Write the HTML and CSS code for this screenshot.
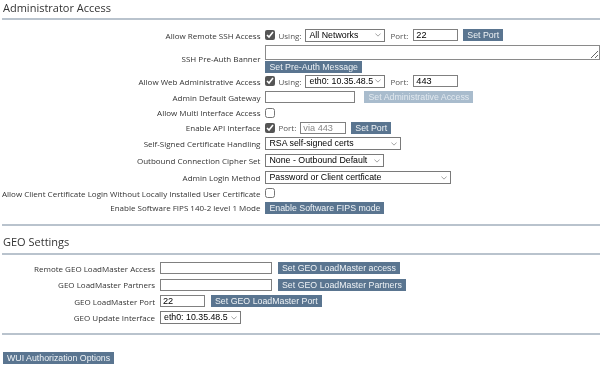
FILE: index.html
```html
<!DOCTYPE html>
<html>
<head>
<meta charset="utf-8">
<link rel="stylesheet" href="styles.css">
</head>
<body>
<section class="sec">
  <h2 class="sec-title">Administrator Access</h2>
  <table class="form form-admin">
    <tr class="h16">
      <td class="lbl">Allow Remote SSH Access</td>
      <td class="ctl">
        <input type="checkbox" class="cb" checked>
        <span class="sub">Using:</span>
        <span class="sel-wrap w80"><select class="sel"><option>All Networks</option></select><svg class="chev" viewBox="0 0 8 5"><path d="M0.5 0.5 L4 4 L7.5 0.5" fill="none" stroke="#666" stroke-width="0.8"/></svg></span>
        <span class="sub sp">Port:</span>
        <input type="text" class="txt w45" value="22">
        <button class="btn ml5">Set Port</button>
      </td>
    </tr>
    <tr>
      <td class="lbl">SSH Pre-Auth Banner</td>
      <td class="ctl">
        <div class="ta-wrap"><textarea class="ta"></textarea></div>
        <button class="btn">Set Pre-Auth Message</button>
      </td>
    </tr>
    <tr class="h16">
      <td class="lbl">Allow Web Administrative Access</td>
      <td class="ctl">
        <input type="checkbox" class="cb" checked>
        <span class="sub">Using:</span>
        <span class="sel-wrap w80"><select class="sel"><option>eth0: 10.35.48.5</option></select><svg class="chev" viewBox="0 0 8 5"><path d="M0.5 0.5 L4 4 L7.5 0.5" fill="none" stroke="#666" stroke-width="0.8"/></svg></span>
        <span class="sub sp">Port:</span>
        <input type="text" class="txt w45" value="443">
      </td>
    </tr>
    <tr class="h16">
      <td class="lbl">Admin Default Gateway</td>
      <td class="ctl">
        <input type="text" class="txt w90">
        <button class="btn btn-dis ml8" disabled>Set Administrative Access</button>
      </td>
    </tr>
    <tr class="h15">
      <td class="lbl">Allow Multi Interface Access</td>
      <td class="ctl"><input type="checkbox" class="cb"></td>
    </tr>
    <tr class="h15">
      <td class="lbl">Enable API Interface</td>
      <td class="ctl">
        <input type="checkbox" class="cb" checked>
        <span class="sub">Port:</span>
        <input type="text" class="txt w46" placeholder="via 443">
        <button class="btn ml5">Set Port</button>
      </td>
    </tr>
    <tr class="h17">
      <td class="lbl">Self-Signed Certificate Handling</td>
      <td class="ctl"><span class="sel-wrap w136"><select class="sel"><option>RSA self-signed certs</option></select><svg class="chev" viewBox="0 0 8 5"><path d="M0.5 0.5 L4 4 L7.5 0.5" fill="none" stroke="#666" stroke-width="0.8"/></svg></span></td>
    </tr>
    <tr class="h17">
      <td class="lbl">Outbound Connection Cipher Set</td>
      <td class="ctl"><span class="sel-wrap w119"><select class="sel"><option>None - Outbound Default</option></select><svg class="chev" viewBox="0 0 8 5"><path d="M0.5 0.5 L4 4 L7.5 0.5" fill="none" stroke="#666" stroke-width="0.8"/></svg></span></td>
    </tr>
    <tr class="h17">
      <td class="lbl">Admin Login Method</td>
      <td class="ctl"><span class="sel-wrap w186"><select class="sel"><option>Password or Client certficate</option></select><svg class="chev" viewBox="0 0 8 5"><path d="M0.5 0.5 L4 4 L7.5 0.5" fill="none" stroke="#666" stroke-width="0.8"/></svg></span></td>
    </tr>
    <tr class="h14">
      <td class="lbl">Allow Client Certificate Login Without Locally Installed User Certificate</td>
      <td class="ctl"><input type="checkbox" class="cb"></td>
    </tr>
    <tr class="h15">
      <td class="lbl">Enable Software FIPS 140-2 level 1 Mode</td>
      <td class="ctl"><button class="btn">Enable Software FIPS mode</button></td>
    </tr>
  </table>
</section>
<section class="sec">
  <h2 class="sec-title geo-title">GEO Settings</h2>
  <table class="form form-geo">
    <tr class="r-geo">
      <td class="lbl">Remote GEO LoadMaster Access</td>
      <td class="ctl"><input type="text" class="txt w112"><button class="btn ml6">Set GEO LoadMaster access</button></td>
    </tr>
    <tr class="r-geo">
      <td class="lbl">GEO LoadMaster Partners</td>
      <td class="ctl"><input type="text" class="txt w112"><button class="btn ml6">Set GEO LoadMaster Partners</button></td>
    </tr>
    <tr class="r-geo">
      <td class="lbl">GEO LoadMaster Port</td>
      <td class="ctl"><input type="text" class="txt w45" value="22"><button class="btn ml6">Set GEO LoadMaster Port</button></td>
    </tr>
    <tr class="r-geo">
      <td class="lbl">GEO Update Interface</td>
      <td class="ctl"><span class="sel-wrap w81"><select class="sel"><option>eth0: 10.35.48.5</option></select><svg class="chev" viewBox="0 0 8 5"><path d="M0.5 0.5 L4 4 L7.5 0.5" fill="none" stroke="#666" stroke-width="0.8"/></svg></span></td>
    </tr>
  </table>
</section>
<div class="end-rule"></div>
<div class="footer">
  <button class="btn">WUI Authorization Options</button>
</div>
</body>
</html>
```
FILE: styles.css
```css
html, body {
  margin: 0;
  padding: 0;
  background: #ffffff;
}
body {
  padding: 0 2px;
  font-family: "Open Sans", "Noto Sans", sans-serif;
  color: #444;
}
.sec-title {
  margin: 0;
  padding: 0 0 0 1px;
  font-weight: normal;
  font-size: 11px;
  line-height: 15px;
  color: #333;
  height: 18px;
  border-bottom: 2px solid #b9c3cd;
}
.geo-title {
  margin-top: 9px;
  height: 22px;
  line-height: 22px;
  border-top: 2px solid #b9c3cd;
  padding-top: 5px;
}
.form {
  border-collapse: collapse;
  margin-top: 7px;
}
.form td {
  padding: 0;
  vertical-align: middle;
}
.lbl {
  font-size: 8px;
  text-align: right;
  white-space: nowrap;
  padding-right: 5px !important;
  color: #333;
}
.form-admin .lbl { width: 256px; }
.form-geo .lbl { width: 153px; }
.form-geo { margin-top: 5px; }
.ctl {
  white-space: nowrap;
  font-size: 0;
}
.h14 { height: 14px; }
.h15 { height: 15px; }
.h16 { height: 16px; }
.h17 { height: 17px; }
.r-geo { height: 16.5px; }
.cb {
  width: 10px;
  height: 10px;
  margin: 0 3px 0 0;
  vertical-align: middle;
  accent-color: #555;
}
.sub {
  font-size: 8px;
  color: #555;
  vertical-align: middle;
  margin-right: 4px;
}
.sp { margin-left: 5px; margin-right: 5px; }
.txt {
  box-sizing: border-box;
  height: 12px;
  border: 1px solid #808080;
  padding: 0 2px;
  font-family: "Liberation Sans", Arial, sans-serif;
  font-size: 9.2px;
  color: #000;
  vertical-align: middle;
  margin: 0;
  outline: none;
}
.txt::placeholder { color: #888; }
.w45 { width: 45px; }
.w46 { width: 46px; }
.w90 { width: 90px; }
.w112 { width: 112px; }
.sel-wrap {
  position: relative;
  display: inline-block;
  vertical-align: middle;
  height: 13px;
}
.sel {
  appearance: none;
  -webkit-appearance: none;
  box-sizing: border-box;
  width: 100%;
  height: 13px;
  border: 1px solid #7a7a7a;
  border-radius: 0;
  background: #fff;
  padding: 0 2px 0 3px;
  margin: 0;
  font-family: "Liberation Sans", Arial, sans-serif;
  font-size: 8.8px;
  line-height: 11px;
  color: #000;
  display: block;
}
.chev {
  position: absolute;
  right: 4px;
  top: 4.5px;
  width: 6px;
  height: 4px;
}
.w80 { width: 80px; }
.w81 { width: 81px; }
.w119 { width: 119px; }
.w136 { width: 136px; }
.w186 { width: 186px; }
.btn {
  box-sizing: border-box;
  height: 12px;
  border: 0;
  border-radius: 0;
  background: #5a7590;
  color: #eef2f5;
  font-family: "Liberation Sans", Arial, sans-serif;
  font-size: 8.8px;
  line-height: 12px;
  padding: 0 4px;
  margin: 0;
  vertical-align: middle;
}
.btn-dis {
  background: #a9bccd;
  color: #e2e9ef;
}
.ml5 { margin-left: 5px; }
.ml6 { margin-left: 6px; }
.ml8 { margin-left: 9px; }
.ta-wrap {
  padding: 2px 0 1px;
  line-height: 0;
}
.ta {
  box-sizing: border-box;
  width: 335px;
  height: 15px;
  border: 1px solid #8a8a8a;
  margin: 0;
  padding: 0;
  resize: vertical;
  display: block;
}
.end-rule {
  margin-top: 7px;
  border-top: 2px solid #b9c3cd;
}
.footer {
  padding: 17px 0 0 1px;
  font-size: 0;
}
```
